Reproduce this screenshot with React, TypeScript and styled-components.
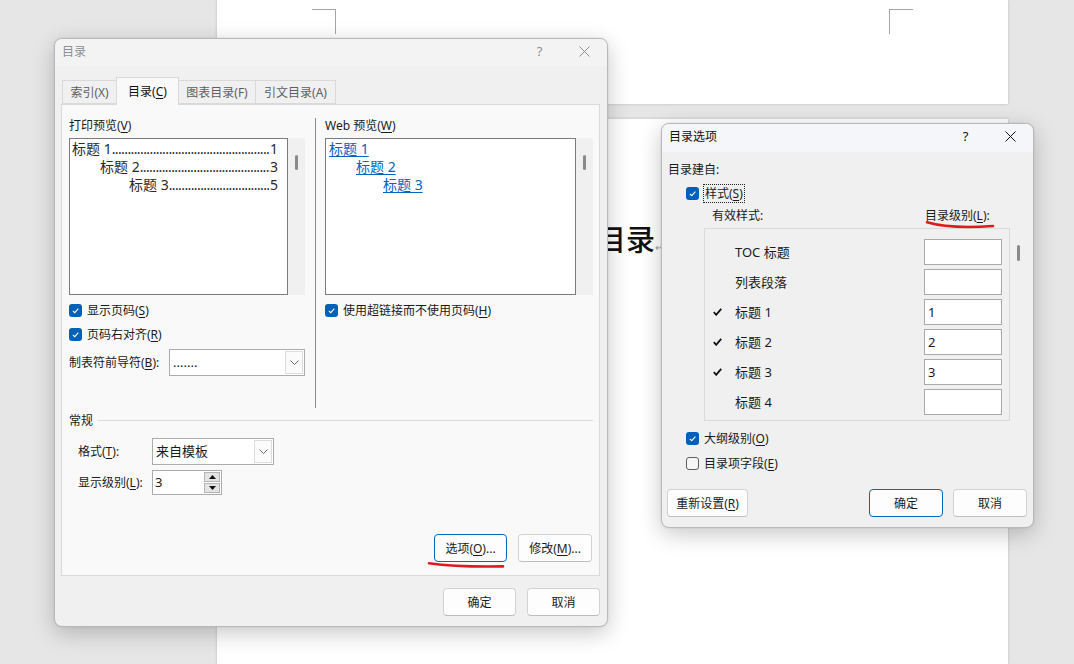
import React from 'react';
import styled, { createGlobalStyle } from 'styled-components';

const GlobalStyle = createGlobalStyle`
  html, body { margin: 0; padding: 0; }
  body {
    width: 1074px;
    height: 664px;
    overflow: hidden;
    background: #e6e6e6;
    font-family: "Noto Sans", "Noto Sans CJK SC", sans-serif;
    font-size: 12px;
    line-height: 17px;
    color: #1a1a1a;
  }
`;

/* ---------- document behind the dialogs ---------- */

const Desk = styled.div`
  position: relative;
  width: 1074px;
  height: 664px;
  overflow: hidden;
  background: #e6e6e6;
`;

const Pages = styled.div`
  display: flex;
  flex-direction: column;
  gap: 15px;
  width: 791px;
  margin-left: 217px;
`;

const Page = styled.div<{ $h: number }>`
  height: ${p => p.$h}px;
  background: #fff;
  box-shadow: 0 0 3px rgba(0, 0, 0, 0.18);
`;

const Marks = styled.div`
  display: flex;
  justify-content: space-between;
  padding: 9px 95px 0;
`;

const CornerMark = styled.span<{ $side: 'left' | 'right' }>`
  width: 23px;
  height: 24px;
  border-top: 1px solid #a6a6a6;
  ${p => (p.$side === 'left' ? 'border-right' : 'border-left')}: 1px solid #a6a6a6;
`;

const Heading = styled.div`
  padding: 105px 0 0 380px;
  font-family: "Noto Sans CJK SC", sans-serif;
  font-size: 29px;
  font-weight: 500;
  line-height: 1;
  color: #111;
`;

const ParaMark = styled.span`
  font-size: 10px;
  font-weight: 400;
  color: #9a9a9a;
`;

/* ---------- dialog frame ---------- */

const Dialog = styled.div<{ $x: number; $y: number; $w: number; $h: number }>`
  position: absolute;
  left: ${p => p.$x}px;
  top: ${p => p.$y}px;
  width: ${p => p.$w}px;
  height: ${p => p.$h}px;
  box-sizing: border-box;
  display: flex;
  flex-direction: column;
  border: 1px solid #b9b9b9;
  border-radius: 8px;
  background: #f0f0f0;
  overflow: hidden;
  box-shadow: 0 6px 22px rgba(0, 0, 0, 0.22), 0 0 2px rgba(0, 0, 0, 0.12);
`;

const TitleBar = styled.div<{ $active?: boolean }>`
  height: 28px;
  flex: none;
  display: flex;
  align-items: center;
  padding: 0 0 3px 7px;
  box-sizing: border-box;
  background: ${p => (p.$active ? '#f4f6f9' : '#f3f3f3')};
  color: ${p => (p.$active ? '#111' : '#8e8e8e')};
`;

const TitleText = styled.span`
  flex: 1;
`;

const TitleButton = styled.span`
  width: 45px;
  display: flex;
  justify-content: center;
  align-items: center;
  font-size: 13px;
`;

const CloseIcon = () => (
  <svg width="11" height="11" viewBox="0 0 11 11">
    <path d="M0.5 0.5 L10.5 10.5 M10.5 0.5 L0.5 10.5" stroke="currentColor" strokeWidth="1" fill="none" />
  </svg>
);

/* ---------- common controls ---------- */

const U = styled.span`
  text-decoration: underline;
  text-underline-offset: 2px;
`;

const CheckBox = styled.span<{ $on?: boolean }>`
  box-sizing: border-box;
  width: 13px;
  height: 13px;
  flex: none;
  border-radius: 3px;
  display: inline-flex;
  align-items: center;
  justify-content: center;
  background: ${p => (p.$on ? '#005fb8' : '#f6f6f6')};
  border: ${p => (p.$on ? 'none' : '1px solid #5f5f5f')};
`;

const Check = ({ on }: { on?: boolean }) => (
  <CheckBox $on={on}>
    {on && (
      <svg width="9" height="9" viewBox="0 0 9 9">
        <path d="M1.8 4.8 L3.7 6.6 L7.4 2.6" stroke="#fff" strokeWidth="1.1" fill="none" />
      </svg>
    )}
  </CheckBox>
);

const CheckRow = styled.div<{ $indent?: number; $top?: number }>`
  display: flex;
  align-items: center;
  gap: 5px;
  height: 20px;
  margin-top: ${p => p.$top || 0}px;
  padding-left: ${p => p.$indent || 0}px;
`;

const FocusLabel = styled.span`
  outline: 1px dotted #222;
  padding: 0 1px;
  line-height: 17px;
`;

const Button = styled.button<{ $w: number; $focus?: boolean }>`
  box-sizing: border-box;
  width: ${p => p.$w}px;
  height: 28px;
  padding: 0;
  font: inherit;
  color: #1b1b1b;
  background: #fdfdfd;
  border: 1px solid ${p => (p.$focus ? '#0067c0' : '#d2d2d2')};
  border-bottom-color: ${p => (p.$focus ? '#0067c0' : '#bdbdbd')};
  border-radius: 4px;
`;

const Combo = styled.div<{ $w: number }>`
  box-sizing: border-box;
  width: ${p => p.$w}px;
  height: 27px;
  display: flex;
  border: 1px solid #acacac;
  background: #fff;
`;

const ComboValue = styled.span`
  flex: 1;
  display: flex;
  align-items: center;
  padding-left: 3px;
  font-size: 13px;
`;

const ComboArrow = styled.span`
  width: 16px;
  margin: 1px;
  display: flex;
  align-items: center;
  justify-content: center;
  border: 1px solid #dcdcdc;
  background: #fbfbfb;
`;

const Chevron = () => (
  <svg width="9" height="5" viewBox="0 0 9 5">
    <path d="M0.5 0.5 L4.5 4.5 L8.5 0.5" stroke="#6a6a6a" strokeWidth="1" fill="none" />
  </svg>
);

const Spin = styled.div`
  box-sizing: border-box;
  width: 70px;
  height: 25px;
  display: flex;
  border: 1px solid #acacac;
  background: #fff;
`;

const SpinValue = styled.span`
  flex: 1;
  padding-left: 2px;
  display: flex;
  align-items: center;
  font-size: 13px;
`;

const SpinButtons = styled.span`
  width: 16px;
  display: flex;
  flex-direction: column;
  gap: 1px;
  padding: 1px 1px 1px 0;
`;

const SpinBtn = styled.span`
  flex: 1;
  display: flex;
  align-items: center;
  justify-content: center;
  background: #e4e4e4;
  border: 1px solid #b4b4b4;
`;

const Tri = ({ down }: { down?: boolean }) => (
  <svg width="7" height="4" viewBox="0 0 7 4">
    <path d={down ? 'M0 0 L7 0 L3.5 4 Z' : 'M0 4 L7 4 L3.5 0 Z'} fill="#111" />
  </svg>
);

/* ---------- TOC dialog ---------- */

const DialogBody = styled.div<{ $pad: string }>`
  flex: 1;
  display: flex;
  flex-direction: column;
  padding: ${p => p.$pad};
`;

const Tabs = styled.div`
  display: flex;
  align-items: flex-end;
  height: 27px;
  margin-left: 1px;
  position: relative;
  z-index: 1;
`;

const Tab = styled.div<{ $w: number; $active?: boolean }>`
  box-sizing: border-box;
  width: ${p => p.$w}px;
  height: ${p => (p.$active ? 28 : 24)}px;
  margin-bottom: ${p => (p.$active ? -1 : 0)}px;
  margin-right: -1px;
  display: flex;
  align-items: center;
  justify-content: center;
  border: 1px solid #d9d9d9;
  border-bottom: ${p => (p.$active ? 'none' : '1px solid #d9d9d9')};
  background: ${p => (p.$active ? '#f9f9f9' : '#f0f0f0')};
  color: ${p => (p.$active ? '#111' : '#5e5e5e')};
  position: relative;
  z-index: ${p => (p.$active ? 2 : 1)};
`;

const TabPanel = styled.div`
  box-sizing: border-box;
  height: 472px;
  display: flex;
  flex-direction: column;
  padding: 12px 6px 13px 7px;
  border: 1px solid #dadada;
  background: #f9f9f9;
`;

const Columns = styled.div`
  display: flex;
  height: 291px;
`;

const Column = styled.div<{ $w: number }>`
  width: ${p => p.$w}px;
  display: flex;
  flex-direction: column;
`;

const VSeparator = styled.div`
  width: 1px;
  margin: 1px 9px 0 10px;
  background: #8c8c8c;
`;

const SectionLabel = styled.div`
  height: 17px;
  margin-bottom: 4px;
`;

const PreviewRow = styled.div`
  display: flex;
  height: 157px;
  margin-bottom: 5px;
`;

const PreviewBox = styled.div`
  flex: 1;
  min-width: 0;
  overflow: hidden;
  box-sizing: border-box;
  border: 1px solid #7b7b7b;
  background: #fff;
  padding: 1px 9px 0 2px;
  font-size: 14px;
  line-height: 18px;
`;

const Track = styled.div<{ $bg?: string }>`
  width: 17px;
  flex: none;
  display: flex;
  justify-content: center;
  background: ${p => p.$bg || '#f0f0f0'};
`;

const Thumb = styled.div<{ $top: number; $h: number }>`
  width: 3px;
  height: ${p => p.$h}px;
  margin-top: ${p => p.$top}px;
  border-radius: 2px;
  background: #8a8a8a;
`;

const TocLine = styled.div<{ $indent: number }>`
  display: flex;
  padding-left: ${p => p.$indent}px;
  color: #2a2a2a;
  white-space: nowrap;
`;

const Leader = styled.span`
  flex: 1;
  min-width: 0;
  overflow: hidden;
  letter-spacing: -0.6px;
  &::after {
    content: '........................................................................................................................';
  }
`;

const LinkLine = styled.div<{ $indent: number }>`
  padding-left: ${p => p.$indent}px;
  color: #0563c1;
  text-decoration: underline;
  text-underline-offset: 2px;
`;

const Rows = styled.div<{ $gap: number }>`
  display: flex;
  flex-direction: column;
  gap: ${p => p.$gap}px;
`;

const LeaderRow = styled.div`
  display: flex;
  align-items: center;
  justify-content: space-between;
  margin-top: 5px;
`;

const GroupHeader = styled.div`
  display: flex;
  align-items: center;
  height: 17px;
  margin-top: 4px;
  &::after {
    content: '';
    flex: 1;
    height: 1px;
    margin-left: 5px;
    background: #dadada;
  }
`;

const FormGrid = styled.div`
  display: grid;
  grid-template-columns: 74px auto;
  row-gap: 5px;
  align-items: center;
  justify-items: start;
  margin-top: 9px;
  padding-left: 9px;
`;

const ButtonRow = styled.div<{ $gap: number }>`
  display: flex;
  justify-content: flex-end;
  gap: ${p => p.$gap}px;
`;

const PanelButtons = styled(ButtonRow)`
  margin-top: auto;
  padding-right: 1px;
`;

const FooterButtons = styled(ButtonRow)`
  margin-top: 12px;
`;

const Scribble = styled.svg<{ $x: number; $y: number }>`
  position: absolute;
  left: ${p => p.$x}px;
  top: ${p => p.$y}px;
  overflow: visible;
`;

/* ---------- options dialog ---------- */

const HeaderGrid = styled.div`
  display: grid;
  grid-template-columns: 213px auto;
  height: 18px;
  margin-top: 3px;
  padding-left: 44px;
  align-items: center;
`;

const ListWrap = styled.div`
  display: flex;
  height: 193px;
  margin: 4px 0 7px 36px;
`;

const StyleList = styled.div`
  width: 306px;
  box-sizing: border-box;
  padding-top: 8px;
  border: 1px solid #dadada;
  overflow: hidden;
`;

const StyleRow = styled.div`
  display: flex;
  align-items: center;
  height: 30px;
  font-size: 13px;
`;

const Mark = styled.span`
  width: 30px;
  padding-left: 8px;
  box-sizing: border-box;
  display: flex;
  align-items: center;
`;

const LevelInput = styled.span`
  box-sizing: border-box;
  width: 78px;
  height: 26px;
  margin: 0 7px 0 auto;
  padding-left: 3px;
  display: flex;
  align-items: center;
  border: 1px solid #a9a9a9;
  background: #fff;
`;

const Tick = () => (
  <svg width="9" height="8" viewBox="0 0 9 8">
    <path d="M0.8 4.2 L3.2 6.8 L8.2 0.8" stroke="#111" strokeWidth="1.8" fill="none" />
  </svg>
);

const OptionButtons = styled.div`
  display: flex;
  gap: 10px;
  margin: 16px 0 0 -1px;
`;

const Spacer = styled.span`
  flex: 1;
`;

const tocLines = [
  { label: '标题 1', page: '1', indent: 0 },
  { label: '标题 2', page: '3', indent: 28 },
  { label: '标题 3', page: '5', indent: 57 },
];

const styles = [
  { name: 'TOC 标题', level: '', on: false },
  { name: '列表段落', level: '', on: false },
  { name: '标题 1', level: '1', on: true },
  { name: '标题 2', level: '2', on: true },
  { name: '标题 3', level: '3', on: true },
  { name: '标题 4', level: '', on: false },
];

export default function App() {
  return (
    <>
      <GlobalStyle />
      <Desk>
        <Pages>
          <Page $h={104}>
            <Marks>
              <CornerMark $side="left" />
              <CornerMark $side="right" />
            </Marks>
          </Page>
          <Page $h={545}>
            <Heading>
              目录<ParaMark>↵</ParaMark>
            </Heading>
          </Page>
        </Pages>

        <Dialog $x={54} $y={38} $w={554} $h={589}>
          <TitleBar>
            <TitleText>目录</TitleText>
            <TitleButton>?</TitleButton>
            <TitleButton>
              <CloseIcon />
            </TitleButton>
          </TitleBar>
          <DialogBody $pad="10px 7px 10px 6px">
            <Tabs>
              <Tab $w={55}>索引(X)</Tab>
              <Tab $w={63} $active>
                <span>
                  目录(<U>C</U>)
                </span>
              </Tab>
              <Tab $w={78}>图表目录(F)</Tab>
              <Tab $w={81}>引文目录(A)</Tab>
            </Tabs>
            <TabPanel>
              <Columns>
                <Column $w={236}>
                  <SectionLabel>
                    打印预览(<U>V</U>)
                  </SectionLabel>
                  <PreviewRow>
                    <PreviewBox>
                      {tocLines.map(l => (
                        <TocLine key={l.label} $indent={l.indent}>
                          <span>{l.label}</span>
                          <Leader />
                          <span>{l.page}</span>
                        </TocLine>
                      ))}
                    </PreviewBox>
                    <Track>
                      <Thumb $top={17} $h={15} />
                    </Track>
                  </PreviewRow>
                  <Rows $gap={4}>
                    <CheckRow>
                      <Check on />
                      <span>
                        显示页码(<U>S</U>)
                      </span>
                    </CheckRow>
                    <CheckRow>
                      <Check on />
                      <span>
                        页码右对齐(<U>R</U>)
                      </span>
                    </CheckRow>
                  </Rows>
                  <LeaderRow>
                    <span>
                      制表符前导符(<U>B</U>):
                    </span>
                    <Combo $w={136}>
                      <ComboValue>.......</ComboValue>
                      <ComboArrow>
                        <Chevron />
                      </ComboArrow>
                    </Combo>
                  </LeaderRow>
                </Column>
                <VSeparator />
                <Column $w={268}>
                  <SectionLabel>
                    Web 预览(<U>W</U>)
                  </SectionLabel>
                  <PreviewRow>
                    <PreviewBox>
                      <LinkLine $indent={1}>标题 1</LinkLine>
                      <LinkLine $indent={28}>标题 2</LinkLine>
                      <LinkLine $indent={55}>标题 3</LinkLine>
                    </PreviewBox>
                    <Track>
                      <Thumb $top={17} $h={15} />
                    </Track>
                  </PreviewRow>
                  <CheckRow>
                    <Check on />
                    <span>
                      使用超链接而不使用页码(<U>H</U>)
                    </span>
                  </CheckRow>
                </Column>
              </Columns>

              <GroupHeader>常规</GroupHeader>
              <FormGrid>
                <span>
                  格式(<U>T</U>):
                </span>
                <Combo $w={122}>
                  <ComboValue>来自模板</ComboValue>
                  <ComboArrow>
                    <Chevron />
                  </ComboArrow>
                </Combo>
                <span>
                  显示级别(<U>L</U>):
                </span>
                <Spin>
                  <SpinValue>3</SpinValue>
                  <SpinButtons>
                    <SpinBtn>
                      <Tri />
                    </SpinBtn>
                    <SpinBtn>
                      <Tri down />
                    </SpinBtn>
                  </SpinButtons>
                </Spin>
              </FormGrid>

              <PanelButtons $gap={11}>
                <Button $w={73} $focus>
                  选项(<U>O</U>)...
                </Button>
                <Button $w={74}>
                  修改(<U>M</U>)...
                </Button>
              </PanelButtons>
            </TabPanel>
            <FooterButtons $gap={11}>
              <Button $w={73}>确定</Button>
              <Button $w={73}>取消</Button>
            </FooterButtons>
          </DialogBody>
        </Dialog>

        <Dialog $x={661} $y={123} $w={373} $h={405}>
          <TitleBar $active>
            <TitleText>目录选项</TitleText>
            <TitleButton>?</TitleButton>
            <TitleButton>
              <CloseIcon />
            </TitleButton>
          </TitleBar>
          <DialogBody $pad="9px 6px 9px 6px">
            <SectionLabel>目录建自:</SectionLabel>
            <CheckRow $indent={18} $top={1}>
              <Check on />
              <FocusLabel>
                样式(<U>S</U>)
              </FocusLabel>
            </CheckRow>
            <HeaderGrid>
              <span>有效样式:</span>
              <span>
                目录级别(<U>L</U>):
              </span>
            </HeaderGrid>
            <ListWrap>
              <StyleList>
                {styles.map(s => (
                  <StyleRow key={s.name}>
                    <Mark>{s.on && <Tick />}</Mark>
                    <span>{s.name}</span>
                    <LevelInput>{s.level}</LevelInput>
                  </StyleRow>
                ))}
              </StyleList>
              <Track $bg="transparent">
                <Thumb $top={17} $h={16} />
              </Track>
            </ListWrap>
            <Rows $gap={5}>
              <CheckRow $indent={18}>
                <Check on />
                <span>
                  大纲级别(<U>O</U>)
                </span>
              </CheckRow>
              <CheckRow $indent={18}>
                <Check />
                <span>
                  目录项字段(<U>E</U>)
                </span>
              </CheckRow>
            </Rows>
            <OptionButtons>
              <Button $w={81}>
                重新设置(<U>R</U>)
              </Button>
              <Spacer />
              <Button $w={74} $focus>
                确定
              </Button>
              <Button $w={74}>取消</Button>
            </OptionButtons>
          </DialogBody>
        </Dialog>

        <Scribble $x={427} $y={560} width="80" height="10">
          <path d="M2 3.2 Q30 7.2 76 6.4" stroke="#e0191c" strokeWidth="2.6" strokeLinecap="round" fill="none" />
        </Scribble>
        <Scribble $x={925} $y={219} width="72" height="12">
          <path d="M2 3.3 Q25 10 68 7" stroke="#e0191c" strokeWidth="2.6" strokeLinecap="round" fill="none" />
        </Scribble>
      </Desk>
    </>
  );
}
